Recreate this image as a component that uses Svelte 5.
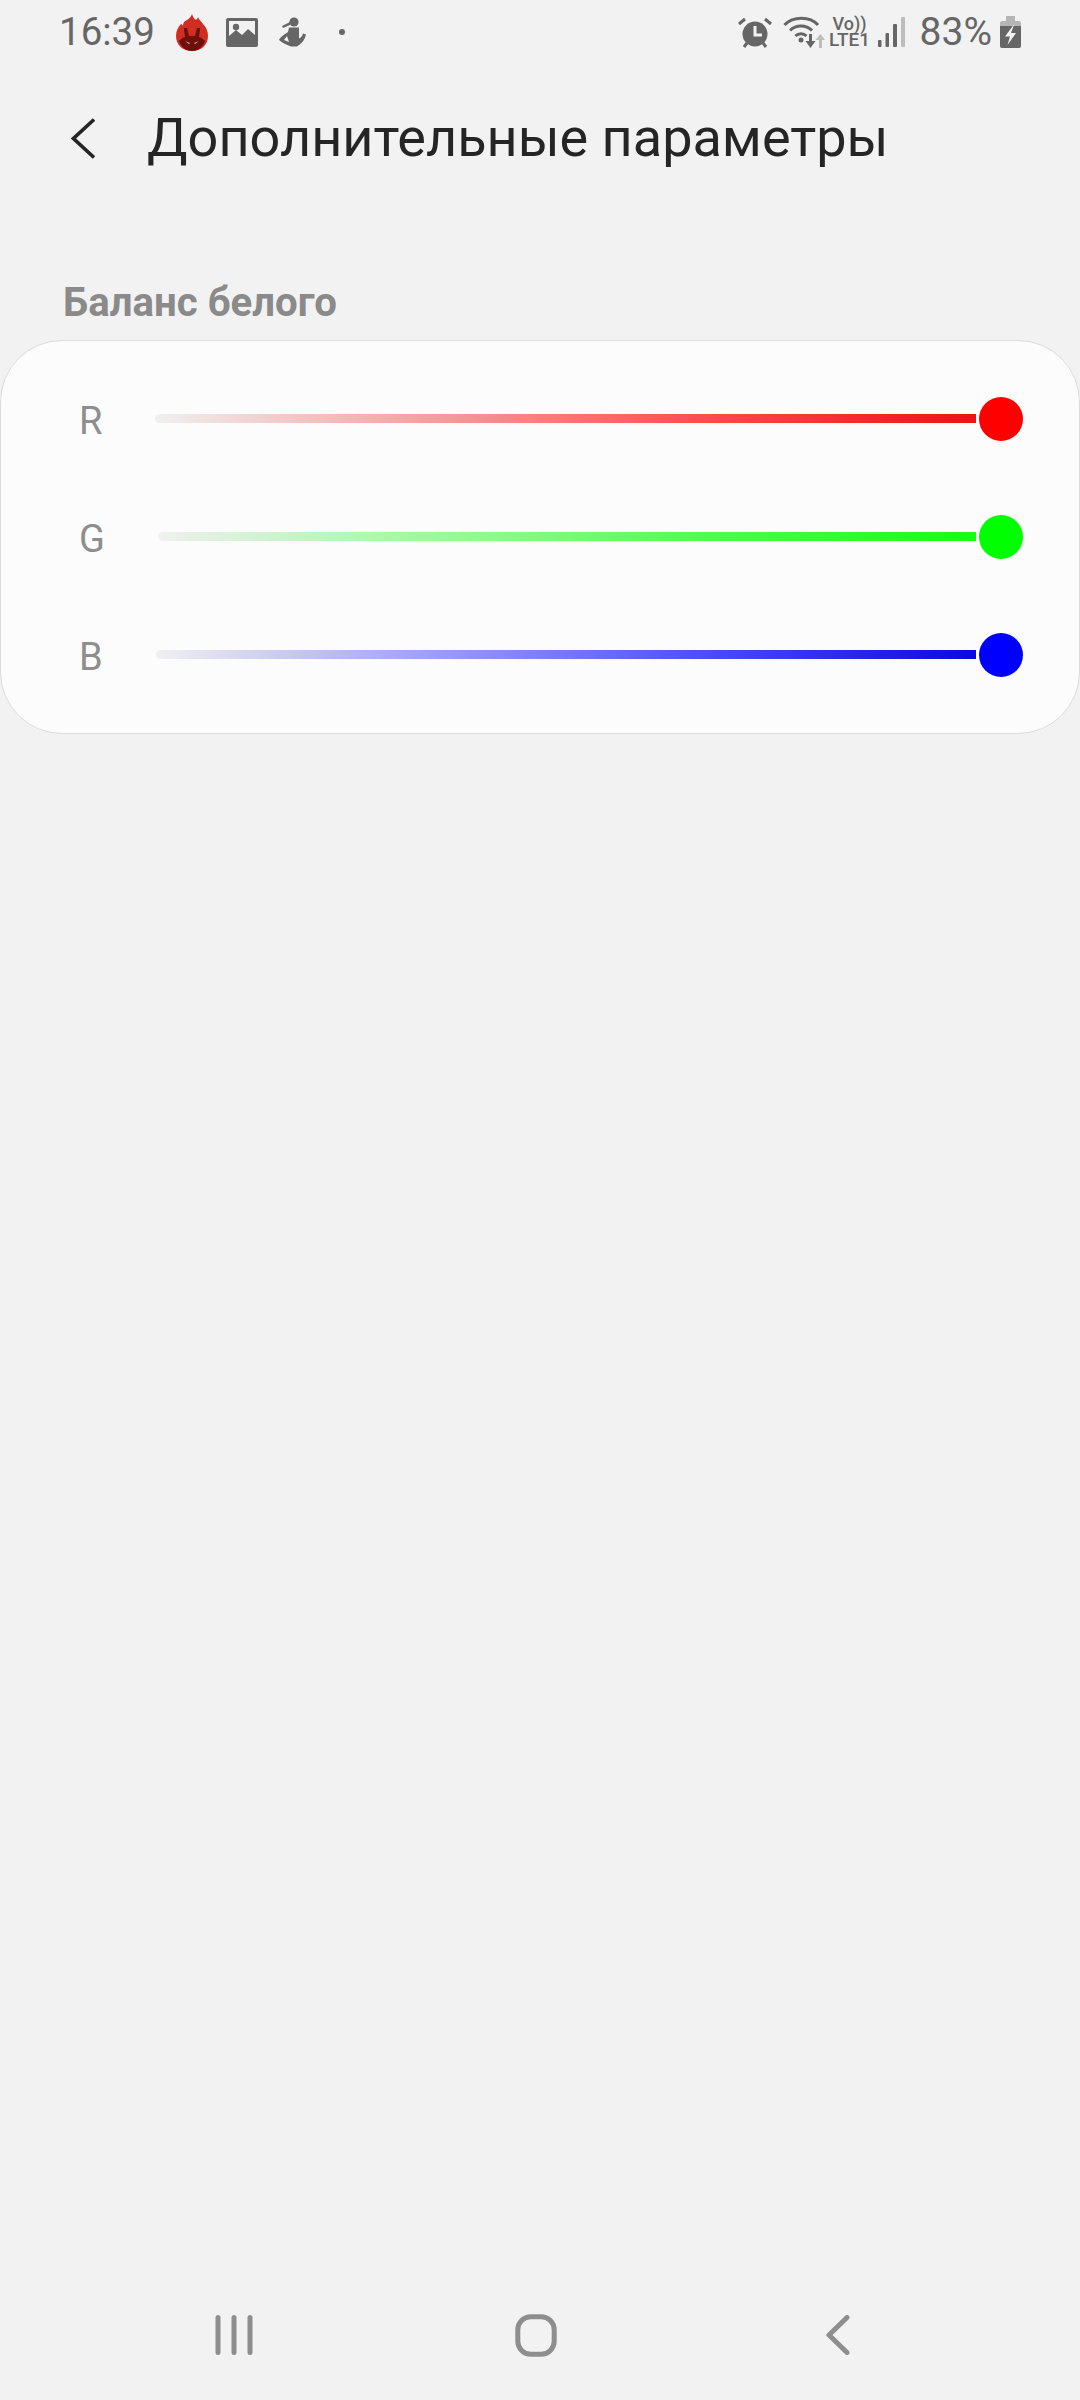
<script>
  const rows = [
    { label: 'R', cls: 'r' },
    { label: 'G', cls: 'g' },
    { label: 'B', cls: 'b' }
  ];
</script>

<div class="page">
  <div class="status">
    <span class="time">16:39</span>
    <svg class="flame" viewBox="0 0 32 37" width="32" height="37">
      <path d="M16 0c1 3 2 5 4 6 1-1 2-2 2-3 1 3 3 4 5 7 3 3 5 7 5 12 0 9-7 15-16 15S0 31 0 22c0-5 2-9 5-12 1 1 2 1 2 2 0-3 1-5 4-6 2-1 4-3 5-6z" fill="#cf2e20"/>
      <path d="M3 27c3-3 6-5 13-5s10 2 13 5c-2 6-7 10-13 10S5 33 3 27z" fill="#6e0f0c"/>
      <path d="M9 24c0-3-1-7-1-10h3c1 3 1 5 2 8zM23 24c0-3 1-7 1-10h-3c-1 3-1 5-2 8z" fill="#6e0f0c"/>
      <path d="M9 27l5 2-1 1zM23 27l-5 2 1 1z" fill="#e9a69f"/>
    </svg>
    <svg class="pic" viewBox="0 0 32 29" width="32" height="29">
      <path fill-rule="evenodd" d="M2 0h28a2 2 0 0 1 2 2v25a2 2 0 0 1-2 2H2a2 2 0 0 1-2-2V2a2 2 0 0 1 2-2zM3 3v15l7-6 6 5 6-6 7 6V3z" fill="#666"/>
      <circle cx="10" cy="9" r="3.2" fill="#666"/>
    </svg>
    <svg class="fig" viewBox="0 0 27 30" width="27" height="30">
      <circle cx="15" cy="5" r="4.6" fill="#666"/>
      <path d="M11 5L3 9l1 2 7-3z" fill="#666"/>
      <path fill-rule="evenodd" d="M10 10.500h10v11c2-1 3-2 4-5l3 1c-1 5-4 9-9 12h-6C8 28 3 26 0 23c1-3 5-5 9-8zM8 19l-3 4 5 2z" fill="#666"/>
    </svg>
    <span class="dot"></span>

    <div class="right">
      <svg class="alarm" viewBox="0 0 34 31" width="34" height="31">
        <circle cx="17" cy="17" r="12.500" fill="#666"/>
        <path d="M17 9v9h7" fill="none" stroke="#f2f2f2" stroke-width="3"/>
        <path d="M1 7l6-5M33 7l-6-5M6 30l3-4M28 30l-3-4" stroke="#666" stroke-width="3" fill="none"/>
      </svg>
      <svg class="wifi" viewBox="0 0 42 33" width="42" height="33">
        <g fill="none" stroke="#666" stroke-width="3">
          <path d="M1.500 10C10 1 27 1 35 10"/>
          <path d="M7 15.500c6-6 16-6 22 0"/>
          <path d="M12.500 21c3-3 8-3 11 0"/>
        </g>
        <circle cx="18" cy="25" r="2.500" fill="#666"/>
        <path d="M26 19h3v7h3.500l-5 7-5-7H26z" fill="#666"/>
        <path d="M36 33h3v-8h3l-4.500-6-5 6H36z" fill="#bdbdbd"/>
      </svg>
      <div class="net">
        <span class="vo">Vo))</span>
        <span class="lte">LTE1</span>
      </div>
      <svg class="signal" viewBox="0 0 27 30" width="27" height="30">
        <rect x="0" y="23" width="3.500" height="7" rx="1" fill="#666"/>
        <rect x="7.500" y="16" width="3.500" height="14" rx="1" fill="#666"/>
        <rect x="15" y="7" width="4" height="23" rx="1" fill="#666"/>
        <rect x="23" y="0" width="4" height="30" rx="1" fill="#bdbdbd"/>
      </svg>
      <span class="pct">83%</span>
      <svg class="batt" viewBox="0 0 21 32" width="21" height="32">
        <path d="M6 0h9v5h4a2 2 0 0 1 2 2v5H0V7a2 2 0 0 1 2-2h4z" fill="#b5b5b5"/>
        <path d="M0 10h21v20a2 2 0 0 1-2 2H2a2 2 0 0 1-2-2z" fill="#666"/>
        <path d="M13.500 9L5 20.500h5L7.500 29 16 17h-5l3-8z" fill="#f2f2f2"/>
      </svg>
    </div>
  </div>

  <header class="head">
    <svg class="back" viewBox="0 0 24 41" width="24" height="41">
      <path d="M23 1.500L2.500 20.500 23 39.500" fill="none" stroke="#252525" stroke-width="3.600"/>
    </svg>
    <h1>Дополнительные параметры</h1>
  </header>

  <h2>Баланс белого</h2>

  <section class="card">
    {#each rows as row}
      <div class="row">
        <span class="label">{row.label}</span>
        <div class="track {row.cls}"></div>
        <div class="thumb {row.cls}"></div>
      </div>
    {/each}
  </section>

  <nav class="nav">
    <div class="slot">
      <svg viewBox="0 0 38 40" width="38" height="40">
        <g stroke="#8e8e8e" stroke-width="5" stroke-linecap="round">
          <path d="M3 2.500v35M19 2.500v35M35 2.500v35"/>
        </g>
      </svg>
    </div>
    <div class="slot">
      <svg viewBox="0 0 42 43" width="42" height="43">
        <rect x="2.800" y="2.700" width="36.400" height="37.600" rx="13" fill="none" stroke="#8e8e8e" stroke-width="5"/>
      </svg>
    </div>
    <div class="slot">
      <svg viewBox="0 0 24 40" width="24" height="40">
        <path d="M21 2.500L3 20l18 17.500" fill="none" stroke="#8e8e8e" stroke-width="5" stroke-linecap="round" stroke-linejoin="round"/>
      </svg>
    </div>
  </nav>
</div>

<style>
  :global(body) { margin: 0; background: #f2f2f2; }
  .page {
    width: 1080px;
    height: 2400px;
    display: flex;
    flex-direction: column;
    background: #f2f2f2;
    font-family: Roboto, "Liberation Sans", sans-serif;
    overflow: hidden;
  }
  .status {
    height: 64px;
    display: flex;
    align-items: center;
    padding: 0 59px 0 59px;
    color: #666;
  }
  .time { font-size: 38.500px; line-height: 44px; width: 117px; }
  .flame { margin-right: 18px; }
  .pic { margin-right: 21px; }
  .fig { margin-right: 33px; }
  .dot { width: 6px; height: 6px; border-radius: 50%; background: #666; }
  .right { margin-left: auto; display: flex; align-items: center; }
  .alarm { margin-right: 11px; }
  .wifi { margin-right: 6px; margin-bottom: 2px; }
  .net {
    width: 38px;
    margin-right: 9px;
    display: flex;
    flex-direction: column;
    align-items: center;
    font-weight: 500;
    color: #666;
  }
  .vo { font-size: 18px; line-height: 15px; }
  .lte { font-size: 19px; line-height: 17px; white-space: nowrap; }
  .signal { margin-right: 15px; }
  .pct { font-size: 39px; line-height: 44px; margin-right: 8px; }
  .head {
    height: 148px;
    display: flex;
    align-items: center;
    padding-left: 71px;
  }
  .back { margin-right: 52px; }
  h1 {
    margin: 0;
    font-size: 54px;
    font-weight: 400;
    line-height: 64px;
    color: #252525;
    white-space: nowrap;
  }
  h2 {
    margin: 69px 0 15px 63px;
    font-size: 40.200px;
    line-height: 44px;
    font-weight: 700;
    color: #8a8a8a;
  }
  .card {
    box-sizing: border-box;
    height: 394px;
    padding: 19px 56px 0 78px;
    background: #fcfcfc;
    border: 1.500px solid #dcdcdc;
    border-radius: 62px;
  }
  .row {
    height: 118px;
    display: flex;
    align-items: center;
  }
  .label {
    font-size: 38px;
    line-height: 44px;
    color: #8e8e8e;
    margin-right: 53px;
    margin-top: 4px;
  }
  .track {
    flex: 1;
    height: 9px;
    margin-bottom: 2px;
    border-radius: 5px 0 0 5px;
  }
  .track.r { background: linear-gradient(90deg, #f0f0f0, #fb4a4a 68%, #e81414); }
  .track.g { background: linear-gradient(90deg, #f0f0f0, #4aff4a 68%, #12ff12); }
  .track.b { background: linear-gradient(90deg, #f0f0f0, #4a4afb 68%, #0808e6); }
  .thumb {
    width: 44px;
    height: 44px;
    border-radius: 50%;
    margin-left: 3px;
  }
  .thumb.r { background: #f00; }
  .thumb.g { background: #0f0; }
  .thumb.b { background: #00f; }
  .nav {
    margin-top: auto;
    height: 130px;
    padding: 0 91px 0 83px;
    box-sizing: border-box;
    display: flex;
    align-items: center;
  }
  .slot { flex: 1; display: flex; justify-content: center; }
</style>
